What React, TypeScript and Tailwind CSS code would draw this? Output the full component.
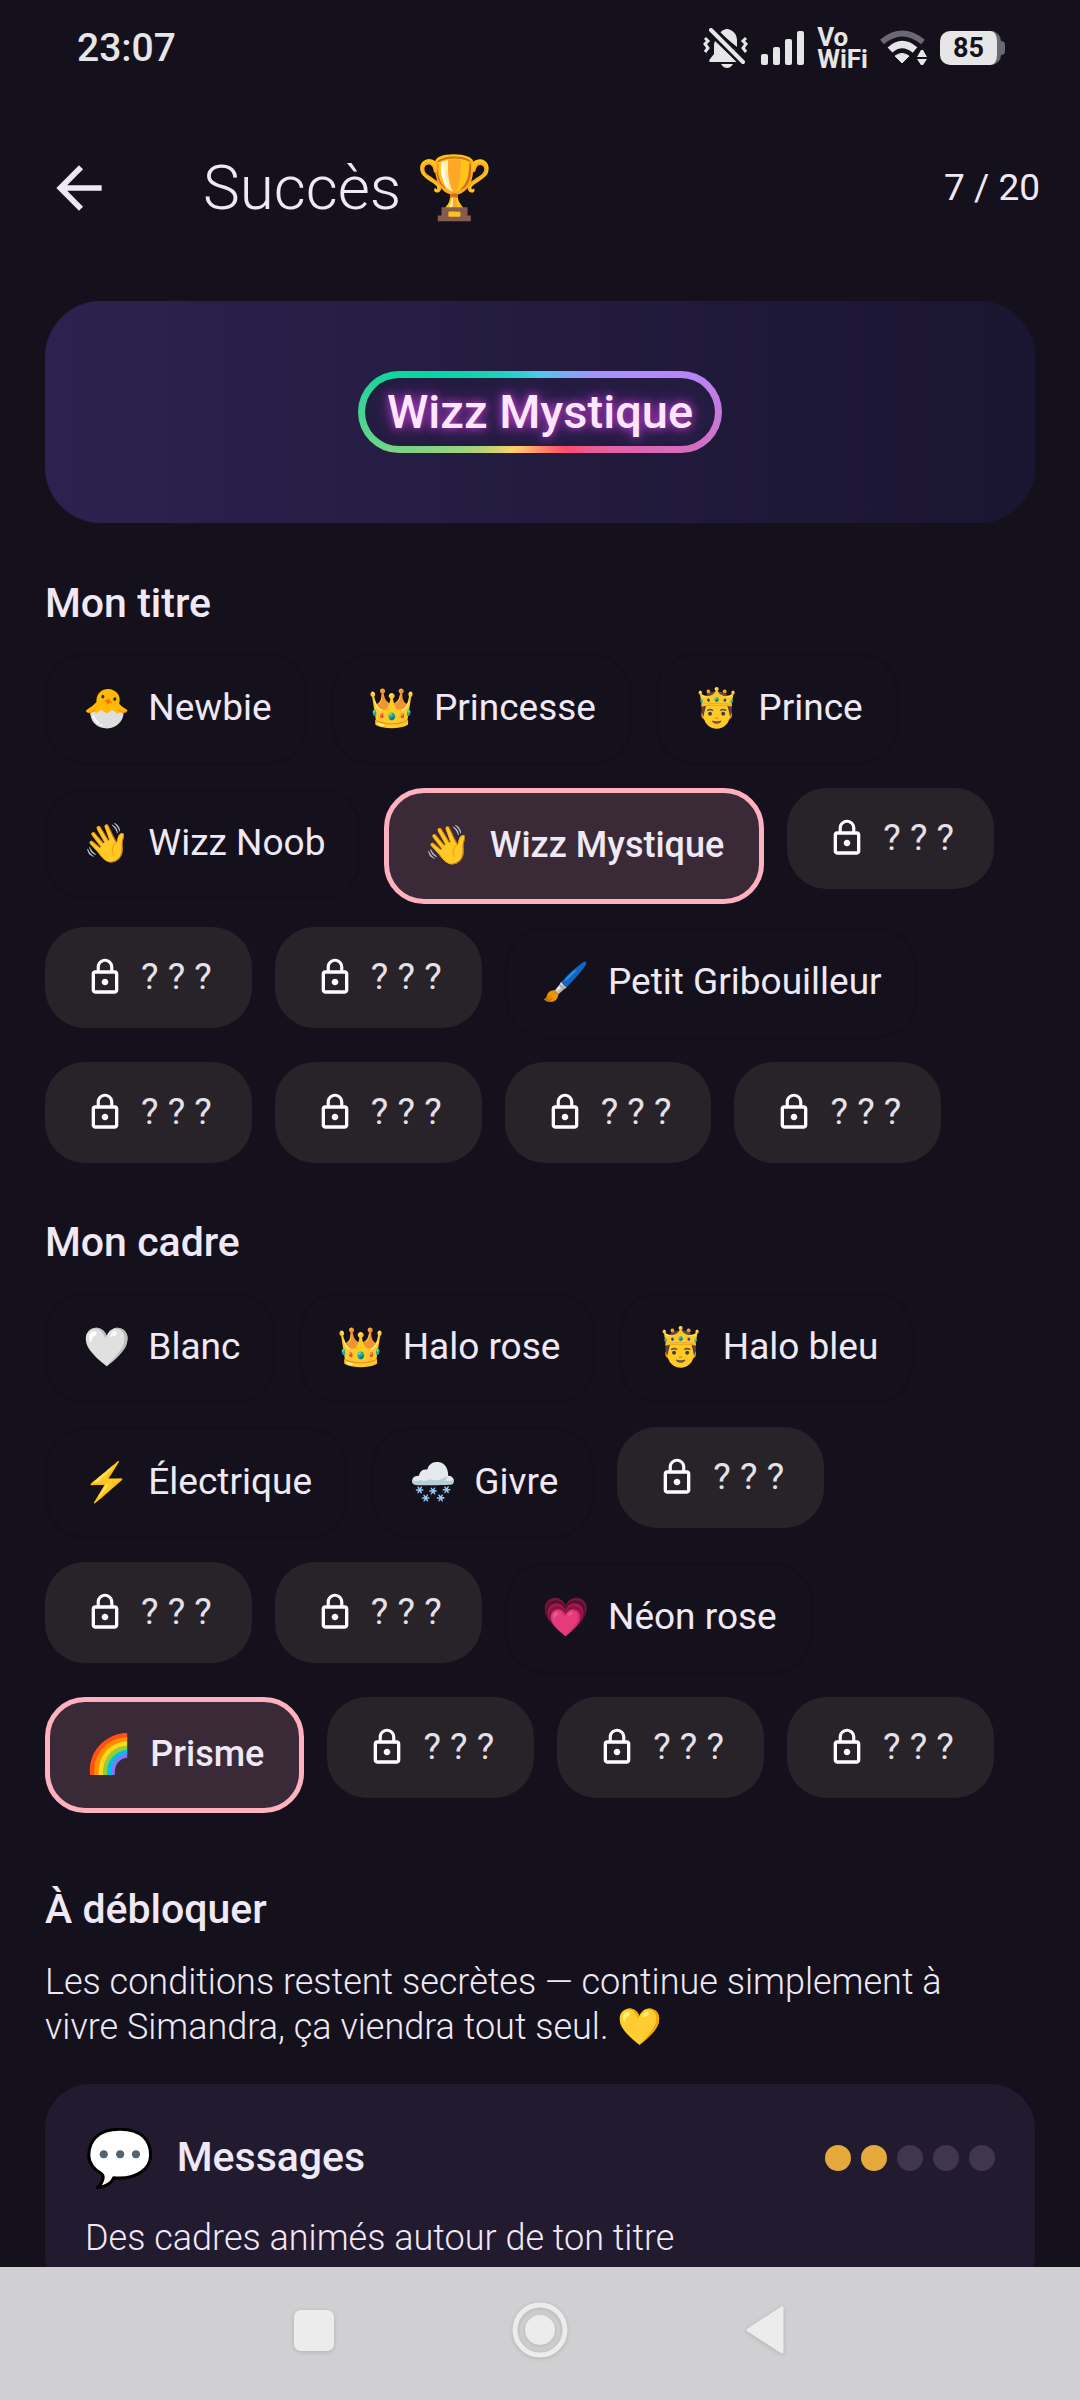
import { cva } from "class-variance-authority"
import { MdArrowBack, MdLockOutline } from "react-icons/md"

interface Reward {
  emoji?: string
  label?: string
}

// rewards without a label are still locked
const titles: Reward[] = [
  { emoji: "🐣", label: "Newbie" },
  { emoji: "👑", label: "Princesse" },
  { emoji: "🤴", label: "Prince" },
  { emoji: "👋", label: "Wizz Noob" },
  { emoji: "👋", label: "Wizz Mystique" },
  {},
  {},
  {},
  { emoji: "🖌️", label: "Petit Gribouilleur" },
  {},
  {},
  {},
  {},
]

const frames: Reward[] = [
  { emoji: "🤍", label: "Blanc" },
  { emoji: "👑", label: "Halo rose" },
  { emoji: "🤴", label: "Halo bleu" },
  { emoji: "⚡", label: "Électrique" },
  { emoji: "🌨️", label: "Givre" },
  {},
  {},
  {},
  { emoji: "💗", label: "Néon rose" },
  { emoji: "🌈", label: "Prisme" },
  {},
  {},
  {},
]

const chip = cva("flex items-center rounded-[40px] leading-[44px] whitespace-nowrap", {
  variants: {
    state: {
      idle: "gap-[18px] border-3 border-[#120f18] pt-[30px] pr-[33px] pb-[32px] pl-[35px] text-[37px]",
      selected:
        "gap-[18px] border-5 border-[#ffb1c0] bg-[#3a2a37] pt-[30px] pr-[35px] pb-[32px] pl-[35px] text-[36px] font-medium",
      locked: "gap-[16px] bg-[#282328] px-[40px] pt-[28px] pb-[29px] text-[37px] text-[#e6e1e9]",
    },
  },
})

function RewardChip({ reward, selected }: { reward: Reward; selected: boolean }) {
  if (!reward.label) {
    return (
      <button type="button" disabled className={chip({ state: "locked" })}>
        <MdLockOutline className="size-[40px] text-white" />
        <span>? ? ?</span>
      </button>
    )
  }

  return (
    <button type="button" aria-pressed={selected} className={chip({ state: selected ? "selected" : "idle" })}>
      <span className="text-[38px]">{reward.emoji}</span>
      <span>{reward.label}</span>
    </button>
  )
}

function RewardSection({ title, rewards, active }: { title: string; rewards: Reward[]; active: string }) {
  return (
    <section>
      <h2 className="text-[41px] leading-[48px] font-medium">{title}</h2>
      <div className="mt-[26px] flex flex-wrap items-start gap-[23px]">
        {rewards.map((reward, i) => (
          <RewardChip key={i} reward={reward} selected={reward.label === active} />
        ))}
      </div>
    </section>
  )
}

function StatusBar() {
  return (
    <div className="flex h-[96px] shrink-0 items-center justify-between pr-[75px] pl-[77px] text-[#e6e6e6]">
      <span className="text-[39px] font-medium">23:07</span>
      <div className="flex items-center gap-[12px]">
        {/* muted + vibrate */}
        <svg width="46" height="40" viewBox="0 0 46 40" fill="currentColor">
          <path d="M17 5C19 2 22 1 24 1C31 2 34 7 34 13V19L17 5Z" />
          <path d="M12 13L34 34H7C6 34 6 32 7 31L11 26V16Z" />
          <path d="M18 36H30C28 39 26 40 24 40S20 39 18 36Z" />
          <path d="M9 2L41 35" stroke="#15111c" strokeWidth="9" />
          <path d="M8 2L40 34" stroke="currentColor" strokeWidth="4" strokeLinecap="round" />
          <path
            d="M2 10L5 13L2 16L5 20L2 24M43 10L40 13L43 16L40 20L43 24"
            fill="none"
            stroke="currentColor"
            strokeWidth="3"
          />
        </svg>
        <svg width="44" height="36" viewBox="0 0 44 36" fill="currentColor">
          <rect x="0" y="24" width="7" height="11" rx="2" />
          <rect x="12" y="17" width="7" height="18" rx="2" />
          <rect x="24" y="9" width="7" height="26" rx="2" />
          <rect x="36" y="1" width="7" height="34" rx="2" />
        </svg>
        <span className="text-[26px] leading-[22px] font-bold">
          Vo
          <br />
          WiFi
        </span>
        <svg width="48" height="36" viewBox="0 0 48 36" fill="none">
          <path d="M2 12Q22 -5 43 12" stroke="#6b6873" strokeWidth="6" />
          <path d="M10 20Q22 9 35 20" stroke="currentColor" strokeWidth="7" />
          <path d="M15 26Q22 21 29 26L22 33Z" fill="currentColor" stroke="currentColor" />
          <path d="M37 27L41 20H43L47 27ZM37 29L41 35H43L47 29Z" fill="currentColor" />
        </svg>
        <div className="flex items-center">
          <span className="flex h-[34px] w-[61px] items-center justify-center rounded-[10px] border-r-4 border-[#6b6873] bg-[#e6e6e6] text-[27px] font-bold text-[#15111c]">
            85
          </span>
          <span className="h-[14px] w-[4px] rounded-r-full bg-[#6b6873]" />
        </div>
      </div>
    </div>
  )
}

function NavBar() {
  return (
    <nav className="flex h-[133px] shrink-0 items-center justify-center gap-[166px] bg-[#d0d0d2] pb-[8px] text-[#ececec]">
      <button type="button" aria-label="Applications récentes">
        <svg width="60" height="60" viewBox="0 0 60 60" className="drop-shadow-sm">
          <rect x="10" y="10" width="40" height="41" rx="7" fill="currentColor" />
        </svg>
      </button>
      <button type="button" aria-label="Accueil">
        <svg width="60" height="60" viewBox="0 0 60 60" fill="none" className="drop-shadow-sm">
          <circle cx="30" cy="30" r="25" stroke="currentColor" strokeWidth="5" />
          <circle cx="30" cy="30" r="15" fill="currentColor" />
        </svg>
      </button>
      <button type="button" aria-label="Retour">
        <svg width="60" height="60" viewBox="0 0 60 60" className="drop-shadow-sm">
          <path
            d="M12 30L46 8V52Z"
            fill="currentColor"
            stroke="currentColor"
            strokeWidth="3"
            strokeLinejoin="round"
          />
        </svg>
      </button>
    </nav>
  )
}

export default function App() {
  return (
    <div className="flex h-screen flex-col overflow-hidden bg-[#15111c] font-[Roboto,'Noto_Color_Emoji',sans-serif] text-[#efe9f5]">
      <StatusBar />

      <header className="flex h-[184px] shrink-0 items-center pr-[40px] pl-[45px]">
        <button type="button" aria-label="Retour">
          <MdArrowBack className="size-[68px]" />
        </button>
        <h1 className="ml-[90px] text-[62px] leading-[76px] font-light">Succès 🏆</h1>
        <span className="ml-auto text-[37px]">7 / 20</span>
      </header>

      <main className="min-h-0 flex-1 overflow-hidden px-[45px] pt-[21px]">
        <div className="flex h-[222px] items-center justify-center rounded-[56px] bg-linear-to-r from-[#2c224f] to-[#1a1530]">
          <div className="rounded-full bg-[conic-gradient(#4cc9f0,#b388ff_72deg,#ff4d6d_144deg,#ffd166_216deg,#06d6a0_288deg,#4cc9f0)] p-[7px]">
            <div className="rounded-full bg-[#231c40] px-[22px] py-[8px] text-[47px] leading-[52px] font-medium text-[#ffe6ff] [text-shadow:0_0_8px_#c040d0,0_0_18px_#8030a0]">
              Wizz Mystique
            </div>
          </div>
        </div>

        <div className="mt-[56px] flex flex-col gap-[55px]">
          <RewardSection title="Mon titre" rewards={titles} active="Wizz Mystique" />
          <RewardSection title="Mon cadre" rewards={frames} active="Prisme" />

          <section className="pt-[17px]">
            <h2 className="text-[41px] leading-[48px] font-medium">À débloquer</h2>
            <p className="mt-[27px] pr-[40px] text-[36px] leading-[45px] font-light">
              Les conditions restent secrètes — continue simplement à vivre Simandra, ça viendra tout seul. 💛
            </p>
            <article className="mt-[34px] rounded-[45px] bg-[#221a2f] px-[40px] py-[38px]">
              <div className="flex items-center">
                <span className="text-[56px] leading-[72px]">💬</span>
                <h3 className="ml-[22px] text-[41px] font-medium">Messages</h3>
                <div className="ml-auto flex gap-[10px]">
                  <span className="size-[26px] rounded-full bg-[#e5a93c]" />
                  <span className="size-[26px] rounded-full bg-[#e5a93c]" />
                  <span className="size-[26px] rounded-full bg-[#41374c]" />
                  <span className="size-[26px] rounded-full bg-[#41374c]" />
                  <span className="size-[26px] rounded-full bg-[#41374c]" />
                </div>
              </div>
              <p className="mt-[22px] text-[36px] leading-[45px] font-light">Des cadres animés autour de ton titre</p>
            </article>
          </section>
        </div>
      </main>

      <NavBar />
    </div>
  )
}
